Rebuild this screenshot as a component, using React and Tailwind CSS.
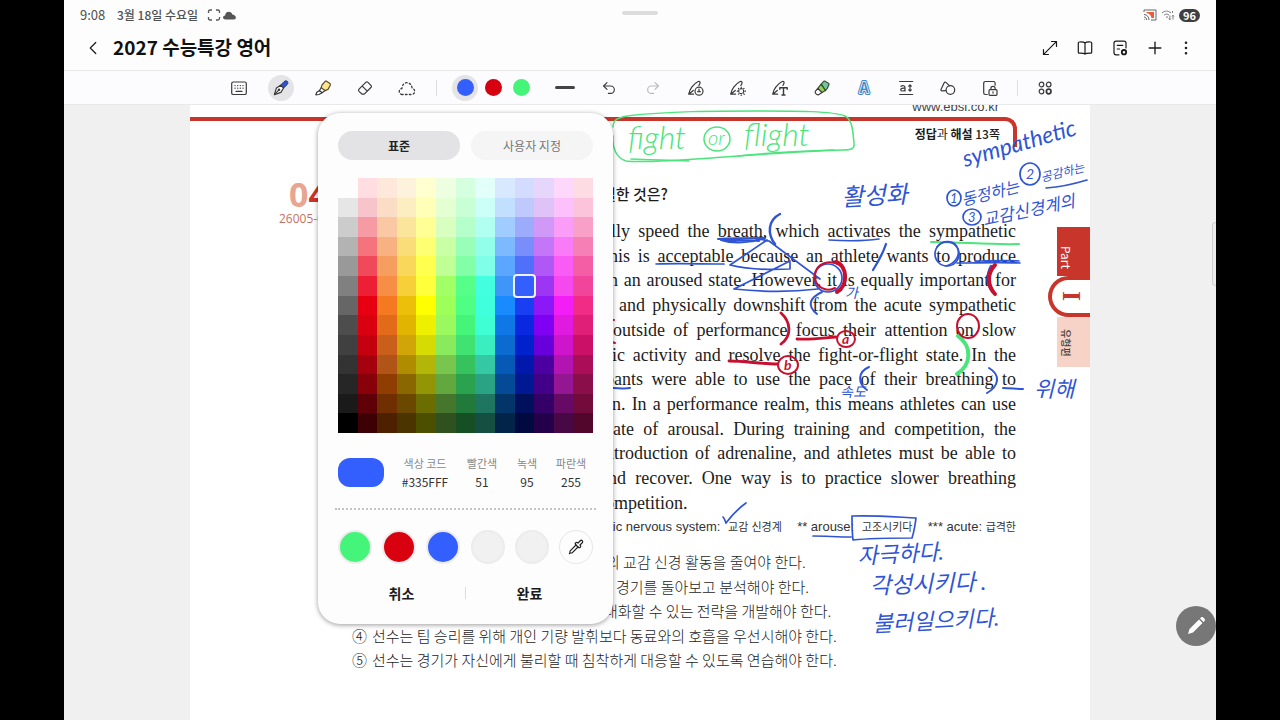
import { useState } from 'react';
import { Plus, EllipsisVertical, ChevronLeft, Pipette, Undo2 } from 'lucide-react';

// One array per column of the palette, light to dark
const PALETTE = [
  ['#fdfdfd', '#e6e6e6', '#cccccc', '#b3b3b3', '#999999', '#808080', '#666666', '#4d4d4d', '#404040', '#333333', '#262626', '#1a1a1a', '#000000'],
  ['#ffdde0', '#f8c4cb', '#f69aa3', '#f4737c', '#f04a5a', '#ec1f35', '#e60012', '#d9000f', '#c4000e', '#a5000d', '#87000a', '#5f0008', '#3c0005'],
  ['#fde8d9', '#fbdcc4', '#fac9a3', '#f8b282', '#f69d60', '#f68f45', '#f47920', '#e26b1a', '#c95f1a', '#b05418', '#8f3d00', '#702f00', '#4c2000'],
  ['#fdf2dc', '#fdeec2', '#fae59a', '#fadd78', '#f8d75a', '#f7cf38', '#ecbf0a', '#e0b400', '#d1a508', '#b08c00', '#8a6700', '#6b4800', '#4c3400'],
  ['#ffffd0', '#ffffb8', '#ffff96', '#ffff74', '#ffff50', '#ffff3c', '#ffff00', '#eff000', '#d7db04', '#b3b508', '#939506', '#6b6d00', '#4c4e00'],
  ['#edffe0', '#e4ffd2', '#d8ffbf', '#c9ffa5', '#c0ff96', '#a2ff66', '#9cff5a', '#99f95f', '#8aea5e', '#78c64e', '#62a83e', '#45762c', '#2f5120'],
  ['#d6ffe0', '#c8ffd4', '#b4ffca', '#99ffb8', '#83ffa8', '#55ff88', '#4fff84', '#45f57a', '#40e372', '#36c25c', '#2ba34e', '#217a39', '#174f25'],
  ['#e3fffa', '#ccfff8', '#b0fff0', '#92ffea', '#80ffe8', '#42ffe0', '#40ffdd', '#3fffd5', '#3beebf', '#34c9a4', '#29a384', '#1e7560', '#154f41'],
  ['#d8e9ff', '#c3dfff', '#a0ccff', '#7db9ff', '#5ba6ff', '#3f96f8', '#1a8aff', '#0f78e6', '#0c6bd0', '#065ab5', '#054a94', '#043568', '#032449'],
  ['#d3dbff', '#c0c9fb', '#9dabfc', '#7a8efb', '#5070fa', '#335fff', '#1a3ef2', '#0a28e0', '#0022cc', '#0018ac', '#001992', '#00105a', '#000a40'],
  ['#e6d6fc', '#dfc2f8', '#d099f8', '#c377f8', '#b058f6', '#9c36f2', '#8c18f8', '#7f00f2', '#6800dc', '#4d00a2', '#420088', '#340068', '#25004a'],
  ['#fdd8fa', '#fcc0fa', '#fa9df8', '#fa7bf8', '#f85cf4', '#f548ee', '#f31ef5', '#e01ade', '#cf15cc', '#b114b0', '#951693', '#660a66', '#470845'],
  ['#fddce4', '#fbc4da', '#f8a0c8', '#f67fb5', '#f45ea5', '#f0459a', '#f02c86', '#e02078', '#cb1068', '#ab0e58', '#8a0e4a', '#720b3c', '#52062b'],
];

const RECENT = ['#45f57a', '#d9000f', '#335fff', null, null];

const PASSAGE = [
  { text: 'lly speed the breath, which activates the sympathetic', width: 'w-[405px]' },
  { text: 'his is acceptable because an athlete wants to produce', width: 'w-[407px]' },
  { text: 'n an aroused state. However, it is equally important for', width: 'w-[407px]' },
  { text: 'and physically downshift from the acute sympathetic', width: 'w-[397px]' },
  { text: 'outside of performance focus their attention on slow', width: 'w-[403px]' },
  { text: 'ic activity and resolve the fight-or-flight state. In the', width: 'w-[404px]' },
  { text: 'pants were able to use the pace of their breathing to', width: 'w-[411px]' },
  { text: 'n. In a performance realm, this means athletes can use', width: 'w-[404px]' },
  { text: 'ate of arousal. During training and competition, the', width: 'w-[403px]' },
  { text: 'ntroduction of adrenaline, and athletes must be able to', width: 'w-[411px]' },
  { text: 'nd recover. One way is to practice slower breathing', width: 'w-[408px]' },
];

const CHOICES = [
  { mark: '①', text: '의 교감 신경 활동을 줄여야 한다.', indent: 'ml-[234px]' },
  { mark: '②', text: '경기를 돌아보고 분석해야 한다.', indent: 'ml-[244px]' },
  { mark: '③', text: '대화할 수 있는 전략을 개발해야 한다.', indent: 'ml-[232px]' },
  { mark: '④', text: '선수는 팀 승리를 위해 개인 기량 발휘보다 동료와의 호흡을 우선시해야 한다.', indent: '' },
  { mark: '⑤', text: '선수는 경기가 자신에게 불리할 때 침착하게 대응할 수 있도록 연습해야 한다.', indent: '' },
];

function Icon({ children, className = 'size-5' }) {
  return (
    <svg
      viewBox="0 0 20 20"
      className={className}
      fill="none"
      stroke="currentColor"
      strokeWidth="1.2"
      strokeLinecap="round"
      strokeLinejoin="round"
    >
      {children}
    </svg>
  );
}

const KeyboardIcon = () => (
  <Icon>
    <rect x="2.7" y="4" width="14.6" height="12.5" rx="1.6" />
    <path d="M6 7.6h.1M8.7 7.6h.1M11.3 7.6h.1M14 7.6h.1M6 10.2h.1M8.7 10.2h.1M11.3 10.2h.1M14 10.2h.1M7 13.3h6" strokeWidth="1.3" />
  </Icon>
);

const PenIcon = () => (
  <Icon>
    <path d="M9.600 7.200 13.200 3.600c1.100-1 2.300-1 3.100-.2.8.8.8 2.100-.2 3.200L12.600 10z" fill="#2f55d4" stroke="#23346e" strokeWidth="1" />
    <path d="M9.600 7.200 5.400 10l-2 6.600 6.500-2.200 2.700-4.400z" fill="#fff" />
    <path d="m3.600 16.400 3.900-4.100" />
    <circle cx="8" cy="11.800" r=".7" />
  </Icon>
);

const HighlighterIcon = () => (
  <Icon>
    <path d="M9 7 12.400 3.200h1.200l3.600 2.600.2 1.200-2.400 4.400-2.900 1.200-3.900-2.900z" fill="#ffe68a" stroke="#5a5030" />
    <path d="m8.200 9.700-1.800 2.800 2.800 2.300 2.900-2.200M6.400 12.500l-2.600 1.700-1 2.600 3.200-.3 3.200-1.700" />
  </Icon>
);

const EraserIcon = () => (
  <Icon>
    <path d="m4 11.200 6.800-6.800c.7-.7 1.500-.7 2.200 0l2.900 2.900c.7.7.7 1.500 0 2.200l-6.700 6.700H7.200L4 13.400c-.6-.6-.6-1.500 0-2.200zM7.200 8.100l5.200 5" />
  </Icon>
);

const LassoIcon = () => (
  <Icon>
    <path
      d="M5.200 16.500c-3.800-.5-3.900-5.500-.3-6 .4-7.700 9.800-7.700 10.200 0 3.600.5 3.500 5.500-.3 6z"
      strokeDasharray="1.600 2.300"
      strokeWidth="1.300"
    />
  </Icon>
);

const PenStroke = () => (
  <path d="M7.600 16.200H2.700C3.400 11.800 7 6 12.200 3.500c1.600-.5 2.300.6 1.700 1.900l-1 2.100M2.700 16.200l4.600-3.700" />
);

const PenTimerIcon = () => (
  <Icon>
    <PenStroke />
    <circle cx="13" cy="13.200" r="4" />
    <path d="M13 11v2.700M11.700 13.700h2.600" />
  </Icon>
);

const PenMagicIcon = () => (
  <Icon>
    <PenStroke />
    <circle cx="13.2" cy="13.200" r="2.500" strokeDasharray="2 1.500" />
    <path d="M13.200 9v.5M13.200 17v.5M9.300 13.200h.4M17 13.200h.5M10.400 10.400l.4.400M15.800 15.800l.5.500M16 10.400l-.3.300M10.500 16.100l.3-.3" />
  </Icon>
);

const PenTextIcon = () => (
  <Icon>
    <PenStroke />
    <path d="M9.800 11.200V9.700h7.400v1.500M13.500 9.700v7.300M12 17h3" strokeWidth="1.4" />
  </Icon>
);

const StyleBrushIcon = () => (
  <Icon>
    <path d="M9.200 6.200 12 3.200h1l3.800 2.200.2 1-1.800 4.200-1.800 2z" fill="#6fc8a0" stroke="#3b4d38" />
    <path d="m9.200 6.200-3.400 4.200 4.200 4.200 3.400-2z" fill="#8ed54f" stroke="#3b4d38" />
    <path d="m5.800 10.400-2.500 3c-.6 1.800 1.400 3.800 3.200 3.400l3.500-2.200z" fill="#fff" />
  </Icon>
);

const TextSizeIcon = () => (
  <Icon>
    <path d="M3.600 3.500h13M3.600 16.500h13M14 7v6M12.700 8.200 14 6.800l1.300 1.400M12.700 11.800 14 13.200l1.300-1.400" />
    <path d="M5 8.300c1.600-1.200 4-.6 4 1.200V13M9 10.200c-2.600-.2-4.300.2-4.300 1.500 0 1.800 3.400 1.700 4.300 0" />
  </Icon>
);

const ShapesIcon = () => (
  <Icon>
    <path d="M7.600 12.600 4 12.900c-.9 0-1.300-.6-1-1.300L6.200 4.700c.4-.7 1.100-.8 1.700-.3l3.500 3.200" />
    <circle cx="12.400" cy="12" r="4.300" />
  </Icon>
);

const PageLockIcon = () => (
  <Icon>
    <path d="M7.200 16.500H5.400c-1 0-1.700-.7-1.700-1.700V5.200c0-1 .7-1.700 1.700-1.700h8c1 0 1.700.7 1.700 1.700v2" />
    <rect x="9" y="11.700" width="8" height="5.600" rx="1" />
    <path d="M10.900 11.500v-1.200c0-2.700 4.200-2.700 4.200 0v1.200M13 13.900v1.200" />
  </Icon>
);

const MoreToolsIcon = () => (
  <Icon>
    <circle cx="6.500" cy="6.500" r="2.300" />
    <circle cx="13.700" cy="6.500" r="2.300" />
    <circle cx="6.500" cy="13.500" r="2.300" />
    <circle cx="13.700" cy="13.500" r="2.300" strokeWidth="1.700" />
  </Icon>
);

function ToolButton({ label, children, className = 'w-[42px]', active }) {
  return (
    <button aria-label={label} title={label} className={`flex h-8 items-center justify-center ${className}`}>
      <span className={`flex size-[26px] items-center justify-center rounded-full ${active ? 'bg-[#e4e4e6]' : ''}`}>
        {children}
      </span>
    </button>
  );
}

function StatusBar() {
  return (
    <div className="grid h-[30px] grid-cols-3 items-center px-4 text-[#505050]">
      <div className="flex items-center text-[13px]">
        <span className="w-[37px]">9:08</span>
        <span className="text-xs font-medium">3월 18일 수요일</span>
        <svg viewBox="0 0 32 14" className="ml-2 h-3.5 w-8" fill="none" stroke="#555">
          <path d="M2.500 5V3.500q0-1.500 1.500-1.500h2M10 2h2q1.500 0 1.500 1.500V5M13.500 9v1.500q0 1.500-1.500 1.500h-2M6 12H4q-1.500 0-1.500-1.500V9" strokeWidth="1.300" />
          <path d="M19.500 11.500c-3.200-.2-3.200-3.800-.4-4 .6-5 6.500-4.400 7.200-1 4 .4 4.800 4.700 1.600 5z" fill="#555" stroke="none" />
        </svg>
      </div>
      <div className="mx-auto mb-1 h-1 w-9 rounded-full bg-[#dcdcdc]" />
      <div className="flex items-center justify-end gap-1">
        <svg viewBox="0 0 14 12" className="h-3 w-3.5" fill="none" stroke="#666">
          <path d="M1 3V1h12v10H8" />
          <path d="M3.500 3h7.500v6H8.500C8 6 6 4.500 3.500 4z" fill="#ee5a3c" stroke="none" />
          <path d="M1 5.500c3 0 5 2.500 5 5.500M1 8c1.500 0 2.700 1.300 2.700 3M1 10.500h.6" />
        </svg>
        <svg viewBox="0 0 14 12" className="h-3 w-3.5" fill="none" stroke="#777">
          <path d="M1 4c3-2.500 6-2.500 9 0M3 6.200c2-1.500 3.500-1.500 5 0M5 8.300l1-.5 1 .5" />
          <path d="M8.800 6.500v4M7.700 9.500l1.100 1.300 1-1.300M12 10.500v-4M10.900 7.500 12 6.200l1 1.300M11.500 2v2" strokeWidth=".9" />
        </svg>
        <span className="rounded-full bg-[#3f3f3f] px-1 text-[11px] leading-[13px] font-bold text-white">96</span>
      </div>
    </div>
  );
}

function TitleBar() {
  return (
    <header className="flex h-10 items-center pr-4 pl-[18px] text-[#1a1a1a]">
      <button aria-label="뒤로" className="pb-1">
        <ChevronLeft className="size-[22px]" strokeWidth={1.3} />
      </button>
      <h1 className="ml-[9px] flex-1 pb-1.5 text-[19px] leading-6 font-bold text-[#111]">2027 수능특강 영어</h1>
      <div className="flex items-center pb-1">
        <button aria-label="전체 화면" className="flex w-[35px] justify-center">
          <Icon>
            <path d="M11.500 3.500h5v5M16.300 3.700 3.700 16.300M3.500 11.500v5h5" />
          </Icon>
        </button>
        <button aria-label="읽기 모드" className="flex w-[35px] justify-center">
          <Icon>
            <path d="M10 5v11M10 5C9 4 7.500 3.800 4.300 4c-.7 0-1 .4-1 1v9.300c0 .6.300.9 1 .9 3.200-.1 4.700-.1 5.700.8 1-.9 2.500-.9 5.700-.8.7 0 1-.3 1-.9V5c0-.6-.3-1-1-1-3.200-.2-4.700 0-5.700 1z" />
          </Icon>
        </button>
        <button aria-label="페이지 설정" className="flex w-[35px] justify-center">
          <Icon>
            <path d="M9 16.800H6c-1.300 0-2-.7-2-2V5.200c0-1.300.7-2 2-2h8c1.300 0 2 .7 2 2V10M7.200 7.300h5.600M7.200 11h2.400" />
            <circle cx="14" cy="14.200" r="2.200" strokeWidth="1.800" />
          </Icon>
        </button>
        <button aria-label="페이지 추가" className="flex w-[35px] justify-center">
          <Plus className="size-5" strokeWidth={1.6} />
        </button>
        <button aria-label="더보기" className="flex w-7 justify-center">
          <EllipsisVertical className="size-[18px]" strokeWidth={1.5} />
        </button>
      </div>
    </header>
  );
}

function Toolbar({ color }) {
  return (
    <nav className="flex h-[35px] items-center justify-center border-y border-[#e9e9ec] bg-[#fcfcfe] pl-1 text-[#3a3a3a]">
      <ToolButton label="키보드"><KeyboardIcon /></ToolButton>
      <ToolButton label="펜" active><PenIcon /></ToolButton>
      <ToolButton label="형광펜"><HighlighterIcon /></ToolButton>
      <ToolButton label="지우개"><EraserIcon /></ToolButton>
      <ToolButton label="선택"><LassoIcon /></ToolButton>
      <div className="mr-3.5 ml-2 h-4 w-px bg-[#dddddf]" />
      <ToolButton label="파란색 펜" className="w-7" active>
        <span className="size-[17px] rounded-full" style={{ backgroundColor: color }} />
      </ToolButton>
      <ToolButton label="빨간색 펜" className="w-7">
        <span className="size-[17px] rounded-full bg-[#d70010]" />
      </ToolButton>
      <ToolButton label="초록색 펜" className="w-7">
        <span className="size-[17px] rounded-full bg-[#45f57a]" />
      </ToolButton>
      <ToolButton label="굵기" className="ml-2 w-11">
        <span className="h-[3px] w-5 rounded-full bg-[#444]" />
      </ToolButton>
      <ToolButton label="실행 취소" className="w-11">
        <Undo2 className="size-4" strokeWidth={1.7} />
      </ToolButton>
      <ToolButton label="다시 실행" className="w-11">
        <Undo2 className="size-4 -scale-x-100 text-[#bbb]" strokeWidth={1.7} />
      </ToolButton>
      <ToolButton label="필기 타이머"><PenTimerIcon /></ToolButton>
      <ToolButton label="필기 다듬기"><PenMagicIcon /></ToolButton>
      <ToolButton label="텍스트로 변환"><PenTextIcon /></ToolButton>
      <ToolButton label="스타일 변경"><StyleBrushIcon /></ToolButton>
      <ToolButton label="글자 효과">
        <svg viewBox="0 0 20 20" className="size-5">
          <text
            x="10"
            y="15"
            textAnchor="middle"
            fontSize="14"
            fontWeight="500"
            fill="#3f86c9"
            stroke="#3f86c9"
            strokeWidth="4"
            strokeLinejoin="round"
          >
            A
          </text>
          <text
            x="10"
            y="15"
            textAnchor="middle"
            fontSize="14"
            fontWeight="500"
            fill="#3f86c9"
            stroke="#d9ecfb"
            strokeWidth="2"
            strokeLinejoin="round"
            paintOrder="stroke"
            aria-hidden="true"
          >
            A
          </text>
        </svg>
      </ToolButton>
      <ToolButton label="글자 크기"><TextSizeIcon /></ToolButton>
      <ToolButton label="도형"><ShapesIcon /></ToolButton>
      <ToolButton label="페이지 잠금"><PageLockIcon /></ToolButton>
      <div className="mr-1.5 ml-1.5 h-4 w-px bg-[#dddddf]" />
      <ToolButton label="도구 모음 편집"><MoreToolsIcon /></ToolButton>
    </nav>
  );
}

function ColorPicker({ color, onChange }) {
  const hex = color.toUpperCase();
  const fields = [
    { id: 'code', label: '색상 코드', value: hex, width: 'ml-[7px] w-[68px]' },
    { id: 'red', label: '빨간색', value: parseInt(hex.slice(1, 3), 16), width: 'w-[46px]' },
    { id: 'green', label: '녹색', value: parseInt(hex.slice(3, 5), 16), width: 'w-11' },
    { id: 'blue', label: '파란색', value: parseInt(hex.slice(5, 7), 16), width: 'w-11' },
  ];

  return (
    <div
      role="dialog"
      aria-label="색상"
      className="absolute top-2 left-32 w-[295px] rounded-[22px] bg-[#fdfdfe] px-5 pt-[18px] pb-[18px] shadow-[0_1px_5px_rgba(0,0,0,0.4)]"
    >
      <div className="flex gap-[11px] text-xs">
        <button className="h-[29px] flex-1 rounded-full bg-[#e3e3e5] font-bold text-[#222]">표준</button>
        <button className="h-[29px] flex-1 rounded-full bg-[#f5f5f6] text-[#777]">사용자 지정</button>
      </div>

      <div className="mt-[18px] grid aspect-square grid-flow-col grid-cols-13 grid-rows-13">
        {PALETTE.flat().map((swatch) => (
          <button
            key={swatch}
            aria-label={swatch}
            onClick={() => onChange(swatch)}
            className={`relative ${swatch === color ? 'z-10' : ''}`}
            style={{ backgroundColor: swatch }}
          >
            {swatch === color && (
              <span className="absolute -inset-[2px] rounded-sm border-2 border-[#eef2ff] bg-inherit" style={{ backgroundColor: swatch }} />
            )}
          </button>
        ))}
      </div>

      <div className="mt-[21px] flex items-center">
        <div className="h-[29px] w-[46px] rounded-xl" style={{ backgroundColor: color }} />
        {fields.map(({ id, label, value, width }) => (
          <div key={id} className={`text-center ${width}`}>
            <label htmlFor={id} className="block text-[11px] leading-[18px] text-[#888]">{label}</label>
            <input id={id} readOnly value={value} className="block h-[18px] w-full text-center text-xs text-[#333]" />
          </div>
        ))}
      </div>

      <div className="-mx-[3px] mt-[18px] border-t-2 border-dotted border-[#c4c4c6]" />

      <div className="mt-5 flex justify-between">
        {RECENT.map((recent, i) => (
          <button
            key={i}
            aria-label={recent ?? '빈 색상'}
            onClick={() => recent && onChange(recent)}
            className="size-[34px] rounded-full border-2 border-[#ececee] bg-[#f1f1f2]"
            style={recent ? { backgroundColor: recent } : undefined}
          />
        ))}
        <button aria-label="스포이트" className="flex size-[34px] items-center justify-center rounded-full border border-[#e6e6e8]">
          <Pipette className="size-4 text-[#222]" strokeWidth={1.8} />
        </button>
      </div>

      <div className="mt-4 flex items-center text-sm font-bold text-[#1a1a1a]">
        <button className="h-[26px] flex-1">취소</button>
        <div className="h-3 w-px bg-[#dddde0]" />
        <button className="h-[26px] flex-1">완료</button>
      </div>
    </div>
  );
}

// Pen marks on top of the page, in page coordinates
function Ink() {
  return (
    <svg
      viewBox="190 105 900 615"
      className="pointer-events-none absolute top-0 left-0 h-[615px] w-[900px]"
      fill="none"
      strokeLinecap="round"
      strokeLinejoin="round"
      fontFamily="Lato, 'Noto Sans CJK KR', sans-serif"
      fontStyle="italic"
    >
      <g stroke="#4be57b" strokeWidth="1.5">
        <path d="M613 127c0-7 4-9 14-11 40-5 90-5 130-5 38 0 76 0 88 5 8 4 8 18 9 27 1 6-3 7-12 7-40 1-90 5-130 8-42 3-72 5-86 3-10-3-14-14-13-25" />
        <path d="M631 159c18 1 38 1 58 2M738 156c30-3 62-5 96-6" />
        <ellipse cx="717" cy="139" rx="13" ry="12" />
        <path d="M931 242c30 0 60 3 88 2" strokeWidth="2" />
        <path d="M958 336c15 11 13 29-1 38" strokeWidth="4" />
      </g>
      <g fill="#4be57b" fontSize="32" fontWeight="300">
        <text x="628" y="149">fight</text>
        <text x="708" y="145" fontSize="20">or</text>
        <text x="744" y="146">flight</text>
      </g>

      <g stroke="#2f55d4" strokeWidth="1.7">
        <path d="M718 239c16-1 32-1 47-1-14 5-32 6-44 2 12 0 28 0 38 1" strokeWidth="2" />
        <path d="M780 214c-12 6-13 20-5 30" strokeWidth="2.5" />
        <path d="M767 240 730 265c16 4 40 5 60 4v-7M759 239l10 2 51 38M790 261l-56 28c28 3 58 3 84 0" />
        <path d="M656 264c22-1 45 0 68 0M829 240c16 1 36 1 50-1" />
        <path d="M886 244c-3 9-8 18-13 26" strokeWidth="2.3" />
        <ellipse cx="828" cy="278" rx="14" ry="14" />
        <ellipse cx="947" cy="254" rx="12" ry="12" />
        <path d="M937 247c6-8 18-7 21 2 2 8-4 15-12 17" />
        <path d="M957 263c20 0 42-1 63 0M975 261c14 0 30-1 44 0" />
        <path d="M822 292c-13 6-15 14-5 22M869 367c-12 5-11 17-2 23M989 368c12 7 10 18-2 25" strokeWidth="2" />
        <path d="M1003 388c7 0 14 1 20 1M613 388c6 0 11 1 17 0" strokeWidth="2" />
        <path d="M723 517c2 2 2 4 3 6 6-8 13-15 20-20" />
        <path d="M813 536c12 0 25 1 38 1M852 516c20-1 44 1 64 2-1 8-2 14-4 20-20 0-40 0-59 2-1-8-1-16-1-24z" />
        <path d="M1046 188c14-1 28-4 41-8" />
        <ellipse cx="954" cy="198" rx="7" ry="8" />
        <ellipse cx="1030" cy="174" rx="10" ry="11" />
        <ellipse cx="972" cy="217" rx="9" ry="8" />
        <path d="M991 266c-5 9-4 19 1 25" strokeWidth="2.5" />
      </g>
      <g fill="#2f55d4" fontSize="18" fontWeight="400">
        <text x="842" y="206" fontSize="24" transform="rotate(-3 842 206)">활성화</text>
        <text x="965" y="167" fontSize="23" transform="rotate(-16 965 167)">sympathetic</text>
        <text x="950" y="203" fontSize="13">1</text>
        <text x="963" y="206" fontSize="16" transform="rotate(-14 963 206)">동정하는</text>
        <text x="1026" y="179" fontSize="14">2</text>
        <text x="1042" y="182" fontSize="12" transform="rotate(-14 1042 182)">공감하는</text>
        <text x="968" y="222" fontSize="13">3</text>
        <text x="984" y="226" fontSize="17" transform="rotate(-12 984 226)">교감신경계의</text>
        <text x="845" y="298" fontSize="14">가</text>
        <text x="840" y="397" fontSize="14">속도</text>
        <text x="1034" y="397" fontSize="22">위해</text>
        <text x="858" y="564" fontSize="22" transform="rotate(-3 858 564)">자극하다.</text>
        <text x="870" y="594" fontSize="23" transform="rotate(-2 870 594)">각성시키다 .</text>
        <text x="873" y="632" fontSize="22" transform="rotate(-3 873 632)">불러일으키다.</text>
      </g>

      <g stroke="#c8102e" strokeWidth="2">
        <path d="M840 265c-10-6-24-2-25 10-1 13 12 17 20 13" />
        <path d="M836 262c12 4 12 24 1 30M995 265c-8 8-8 20 0 29" strokeWidth="4" />
        <path d="M781 313c9 8 12 22 0 31M797 339c14 1 26-1 39-2M729 361c16 0 32 3 48 3" strokeWidth="2.8" />
        <ellipse cx="846" cy="339" rx="9" ry="8" />
        <ellipse cx="788" cy="365" rx="10" ry="9" />
        <ellipse cx="968" cy="326" rx="11" ry="12" />
        <path d="M612 320h2M612 342l3 1" />
      </g>
      <g fill="#c8102e" fontSize="14" fontWeight="700">
        <text x="842" y="344">a</text>
        <text x="784" y="370">b</text>
      </g>
    </svg>
  );
}

function Page() {
  return (
    <article className="w-[900px] max-w-full bg-white text-[#1c1c1c]">
      <p className="-mt-2 pr-[91px] text-right font-['Liberation_Sans'] text-[13px] leading-5 text-[#444]">www.ebsi.co.kr</p>
      <div className="mr-[73px] flex h-[30px] items-center justify-end rounded-tr-xl border-t-4 border-r-4 border-[#c8352a] pr-[13px] text-xs">
        <p><b>정답</b>과 <b>해설</b> <span className="font-medium">13쪽</span></p>
      </div>

      <div className="flex">
        <div className="w-[162px] shrink-0 pt-7 pl-[89px] font-['Open_Sans']">
          <p className="pl-2.5 text-[34px] leading-[38px] font-bold text-[#c8352a]"><span className="text-[#e8a590]">0</span>4</p>
          <p className="text-xs leading-3 text-[#c8705f]">26005-0</p>
        </div>

        <div className="w-[664px] shrink-0 pt-[35px]">
          <h2 className="pl-[250px] text-[15px] leading-6 font-medium">절한 것은?</h2>
          <div className="mt-[13px] flex h-[296px] flex-col items-end justify-between font-['Liberation_Serif'] text-[18px] leading-6">
            {PASSAGE.map(({ text, width }) => (
              <p key={text} className={`text-justify whitespace-nowrap [text-align-last:justify] ${width}`}>{text}</p>
            ))}
            <p className="w-[411px]">ompetition.</p>
          </div>
          <div className="ml-[250px] flex justify-between font-['Liberation_Sans','Noto_Sans_CJK_KR'] text-[13px] leading-6 whitespace-nowrap text-[#333]">
            <span>etic nervous system: <span className="ml-1 text-[11px]">교감 신경계</span></span>
            <span>** arouse: <span className="ml-1 text-[11px]">고조시키다</span></span>
            <span>*** acute: <span className="text-[11px]">급격한</span></span>
          </div>
          <ol className="mt-[11px] flex h-[122px] flex-col justify-between text-[15px] leading-6 font-light">
            {CHOICES.map(({ mark, text, indent }) => (
              <li key={mark} className="flex whitespace-nowrap">
                <span className="w-5">{mark}</span>
                <span className={indent}>{text}</span>
              </li>
            ))}
          </ol>
        </div>

        <aside className="ml-auto flex w-[42px] flex-col items-end pt-20 text-[#c8352a]">
          <div className="h-[49px] w-[33px] bg-[#c8352a] pt-[19px] pr-4 text-xs leading-4 text-white [writing-mode:vertical-rl]">
            Part
          </div>
          <div className="flex h-[41px] w-[42px] items-center justify-center rounded-l-full border-4 border-r-0 border-[#c8352a] bg-white font-['Liberation_Serif'] text-[26px] leading-8 font-bold [writing-mode:vertical-rl]">
            I
          </div>
          <div className="h-[50px] w-[33px] bg-[#f6d3c6] pt-3 pr-[18px] text-[10px] leading-3 font-medium text-[#444] [text-orientation:sideways] [writing-mode:vertical-rl]">
            유형편
          </div>
        </aside>
      </div>
    </article>
  );
}

function App() {
  const [color, setColor] = useState('#335fff');

  return (
    <div className="h-screen bg-black px-16 font-['Noto_Sans_CJK_KR',sans-serif]">
      <div className="relative flex h-full flex-col overflow-hidden bg-[#fdfdfd]">
        <StatusBar />
        <TitleBar />
        <Toolbar color={color} />

        <main className="flex flex-1 justify-center overflow-hidden bg-[#f0f0f0]">
          <div className="relative bg-white">
            <Page />
            <Ink />
            <ColorPicker color={color} onChange={setColor} />
          </div>
        </main>

        <div className="absolute top-[222px] right-0 h-16 w-1 rounded-l-full border border-r-0 border-[#cfcfcf] bg-[#ececec]" />
        <button
          aria-label="편집"
          className="absolute right-0 bottom-[74px] flex size-10 items-center justify-center rounded-full bg-[#777] text-white"
        >
          <svg viewBox="0 0 20 20" className="size-5" fill="currentColor">
            <path d="m2 18 1.500-5L13 3.500 16.500 7 7 16.500zM14 2.500l1-1c.7-.6 1.500-.6 2.200 0l1.300 1.300c.6.700.6 1.500 0 2.200l-1 1z" />
          </svg>
        </button>
      </div>
    </div>
  );
}

export default App;
